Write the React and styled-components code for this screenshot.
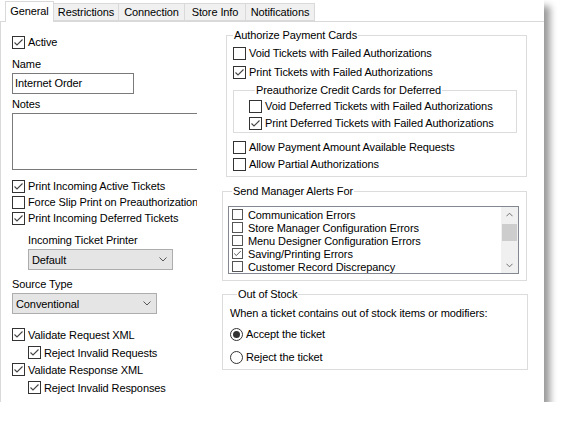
import React from "react";
import styled, { createGlobalStyle } from "styled-components";

const GlobalStyle = createGlobalStyle`
  html, body {
    margin: 0;
    padding: 0;
    background: #fff;
  }
  body {
    font-family: "Liberation Sans", Arial, sans-serif;
    font-size: 11px;
    letter-spacing: -0.1px;
    color: #000;
  }
`;

const Window = styled.div`
  width: 544px;
  height: 402px;
  background: #fff;
  box-shadow: 6px 6px 7px rgba(0, 0, 0, 0.4);
  display: flex;
  flex-direction: column;
`;

const TabStrip = styled.div`
  height: 21px;
  display: flex;
  align-items: flex-end;
  padding-left: 5px;
  border-bottom: 1px solid #d9d9d9;
`;

const Tab = styled.div`
  box-sizing: border-box;
  width: ${(p) => p.$w}px;
  height: ${(p) => (p.$active ? 21 : 18)}px;
  margin-left: ${(p) => (p.$first ? 0 : -1)}px;
  margin-bottom: ${(p) => (p.$active ? -1 : 0)}px;
  border: 1px solid #d9d9d9;
  border-bottom: ${(p) => (p.$active ? "none" : "1px solid #d9d9d9")};
  background: ${(p) => (p.$active ? "#fff" : "#f0f0f0")};
  position: relative;
  z-index: ${(p) => (p.$active ? 1 : 0)};
  display: flex;
  align-items: ${(p) => (p.$active ? "flex-start" : "center")};
  padding-top: ${(p) => (p.$active ? 3 : 0)}px;
  justify-content: center;
  white-space: nowrap;
`;

const Page = styled.div`
  flex: 1;
  display: flex;
  border-left: 1px solid #d9d9d9;
`;

const LeftColumn = styled.div`
  width: 185px;
  padding-left: 11px;
  overflow: hidden;
  display: flex;
  flex-direction: column;
  align-items: flex-start;
`;

const RightColumn = styled.div`
  width: 306px;
  margin-left: 25px;
  padding-top: 5px;
  display: flex;
  flex-direction: column;
`;

const Row = styled.div`
  display: flex;
  align-items: center;
  height: ${(p) => p.$h || 16}px;
  margin-top: ${(p) => p.$mt || 0}px;
  padding-left: ${(p) => p.$indent || 0}px;
  white-space: nowrap;
  flex: none;
`;

const Label = styled.div`
  height: 16px;
  line-height: 16px;
  margin-top: ${(p) => p.$mt || 0}px;
  padding-left: ${(p) => p.$indent || 0}px;
  white-space: nowrap;
`;

const Box = styled.span`
  box-sizing: border-box;
  width: ${(p) => (p.$small ? 11 : 13)}px;
  height: ${(p) => (p.$small ? 11 : 13)}px;
  border: 1px solid ${(p) => (p.$small ? "#555" : "#333")};
  background: #fff;
  flex: none;
  display: flex;
  align-items: center;
  justify-content: center;
  margin-right: ${(p) => (p.$small ? 5 : 3)}px;
`;

const Check = ({ checked, small, children, ...rest }) => (
  <Row {...rest}>
    <Box $small={small}>
      {checked && (
        <svg width={small ? 9 : 11} height={small ? 9 : 11} viewBox="0 0 11 11">
          <path d="M1.5 5.5 L4 8 L9.5 2.5" fill="none" stroke="#444" strokeWidth="1.1" />
        </svg>
      )}
    </Box>
    <span>{children}</span>
  </Row>
);

const Circle = styled.span`
  box-sizing: border-box;
  width: 13px;
  height: 13px;
  border-radius: 50%;
  border: 1px solid #333;
  background: #fff;
  flex: none;
  display: flex;
  align-items: center;
  justify-content: center;
  margin-right: 3px;
`;

const Dot = styled.span`
  width: 7px;
  height: 7px;
  border-radius: 50%;
  background: #333;
`;

const Radio = ({ checked, children, ...rest }) => (
  <Row {...rest}>
    <Circle>{checked && <Dot />}</Circle>
    <span>{children}</span>
  </Row>
);

const TextInput = styled.div`
  box-sizing: border-box;
  width: ${(p) => p.$w}px;
  height: ${(p) => p.$h}px;
  margin-top: ${(p) => p.$mt || 0}px;
  border: 1px solid #7a7a7a;
  background: #fff;
  padding: 3px 2px;
  line-height: 13px;
  flex: none;
`;

const Select = styled.div`
  box-sizing: border-box;
  width: ${(p) => p.$w}px;
  height: 21px;
  margin-top: ${(p) => p.$mt || 0}px;
  margin-left: ${(p) => p.$indent || 0}px;
  border: 1px solid #adadad;
  background: #e5e5e5;
  display: flex;
  align-items: center;
  justify-content: space-between;
  padding: 0 5px 0 3px;
  flex: none;
`;

const Chevron = ({ up, color = "#555", w = 8 }) => (
  <svg width={w} height="5" viewBox="0 0 8 5">
    <path
      d={up ? "M0.5 4.5 L4 1 L7.5 4.5" : "M0.5 0.5 L4 4 L7.5 0.5"}
      fill="none"
      stroke={color}
      strokeWidth="1"
    />
  </svg>
);

const Group = styled.fieldset`
  margin: ${(p) => p.$mt || 0}px ${(p) => p.$mr || 0}px 0 ${(p) => p.$ml || 0}px;
  padding: 0 ${(p) => p.$pr || 0}px ${(p) => p.$pb || 0}px ${(p) => p.$pl || 0}px;
  border: 1px solid #dcdcdc;
  min-width: 0;
`;

const Legend = styled.legend`
  padding: 0 1px;
  margin-left: ${(p) => p.$ml || 0}px;
  line-height: 16px;
  font-size: 11px;
`;

const ListBox = styled.div`
  box-sizing: border-box;
  height: 68px;
  margin-top: 7px;
  border: 1px solid #828790;
  background: #fff;
  display: flex;
`;

const ListItems = styled.div`
  flex: 1;
  padding: 1px 0 0 3px;
  overflow: hidden;
`;

const ScrollBar = styled.div`
  width: 17px;
  background: #f0f0f0;
  display: flex;
  flex-direction: column;
  align-items: center;
`;

const ScrollArrow = styled.div`
  height: 15px;
  width: 100%;
  display: flex;
  align-items: center;
  justify-content: center;
`;

const Thumb = styled.div`
  width: 15px;
  height: 17px;
  margin-top: 2px;
  background: #cdcdcd;
`;

const Track = styled.div`
  flex: 1;
  width: 100%;
  display: flex;
  flex-direction: column;
  align-items: center;
`;

const tabs = [
  ["General", 49],
  ["Restrictions", 66],
  ["Connection", 67],
  ["Store Info", 62],
  ["Notifications", 70],
];

const alerts = [
  ["Communication Errors", false],
  ["Store Manager Configuration Errors", false],
  ["Menu Designer Configuration Errors", false],
  ["Saving/Printing Errors", true],
  ["Customer Record Discrepancy", false],
];

export default function App() {
  return (
    <>
      <GlobalStyle />
      <Window>
        <TabStrip>
          {tabs.map(([name, w], i) => (
            <Tab key={name} $w={w} $active={i === 0} $first={i === 0}>
              {name}
            </Tab>
          ))}
        </TabStrip>
        <Page>
          <LeftColumn>
            <Check checked $mt={12}>Active</Check>
            <Label $mt={6}>Name</Label>
            <TextInput $w={122} $h={21} $mt={1}>Internet Order</TextInput>
            <Label $mt={2}>Notes</Label>
            <TextInput $w={186} $h={57} $mt={1} />
            <Check checked $mt={8}>Print Incoming Active Tickets</Check>
            <Check>Force Slip Print on Preauthorizations</Check>
            <Check checked>Print Incoming Deferred Tickets</Check>
            <Label $mt={6} $indent={16}>Incoming Ticket Printer</Label>
            <Select $w={145} $mt={1} $indent={16}>
              <span>Default</span>
              <Chevron />
            </Select>
            <Label $mt={6}>Source Type</Label>
            <Select $w={145} $mt={1}>
              <span>Conventional</span>
              <Chevron />
            </Select>
            <Check checked $h={17} $mt={12}>Validate Request XML</Check>
            <Check checked $h={17} $mt={1} $indent={16}>Reject Invalid Requests</Check>
            <Check checked $h={17}>Validate Response XML</Check>
            <Check checked $h={17} $mt={1} $indent={16}>Reject Invalid Responses</Check>
          </LeftColumn>

          <RightColumn>
            <Group $ml={4} $mr={1} $pl={6} $pr={9} $pb={4}>
              <Legend>Authorize Payment Cards</Legend>
              <Check $mt={2}>Void Tickets with Failed Authorizations</Check>
              <Check checked $mt={3}>Print Tickets with Failed Authorizations</Check>
              <Group $mt={2} $pl={15} $pb={1}>
                <Legend $ml={6}>Preauthorize Credit Cards for Deferred</Legend>
                <Check>Void Deferred Tickets with Failed Authorizations</Check>
                <Check checked $mt={1}>Print Deferred Tickets with Failed Authorizations</Check>
              </Group>
              <Check $mt={6}>Allow Payment Amount Available Requests</Check>
              <Check $mt={1}>Allow Partial Authorizations</Check>
            </Group>

            <Group $mt={6} $mr={1} $pl={5} $pr={7} $pb={6}>
              <Legend $ml={4}>Send Manager Alerts For</Legend>
              <ListBox>
                <ListItems>
                  {alerts.map(([name, on]) => (
                    <Check key={name} small checked={on} $h={13}>
                      {name}
                    </Check>
                  ))}
                </ListItems>
                <ScrollBar>
                  <ScrollArrow>
                    <Chevron up color="#606060" w={7} />
                  </ScrollArrow>
                  <Track>
                    <Thumb />
                  </Track>
                  <ScrollArrow>
                    <Chevron color="#606060" w={7} />
                  </ScrollArrow>
                </ScrollBar>
              </ListBox>
            </Group>

            <Group $mt={5} $pl={7} $pb={4}>
              <Legend $ml={7}>Out of Stock</Legend>
              <Label $mt={3}>When a ticket contains out of stock items or modifiers:</Label>
              <Radio checked $mt={5}>Accept the ticket</Radio>
              <Radio $mt={7}>Reject the ticket</Radio>
            </Group>
          </RightColumn>
        </Page>
      </Window>
    </>
  );
}
